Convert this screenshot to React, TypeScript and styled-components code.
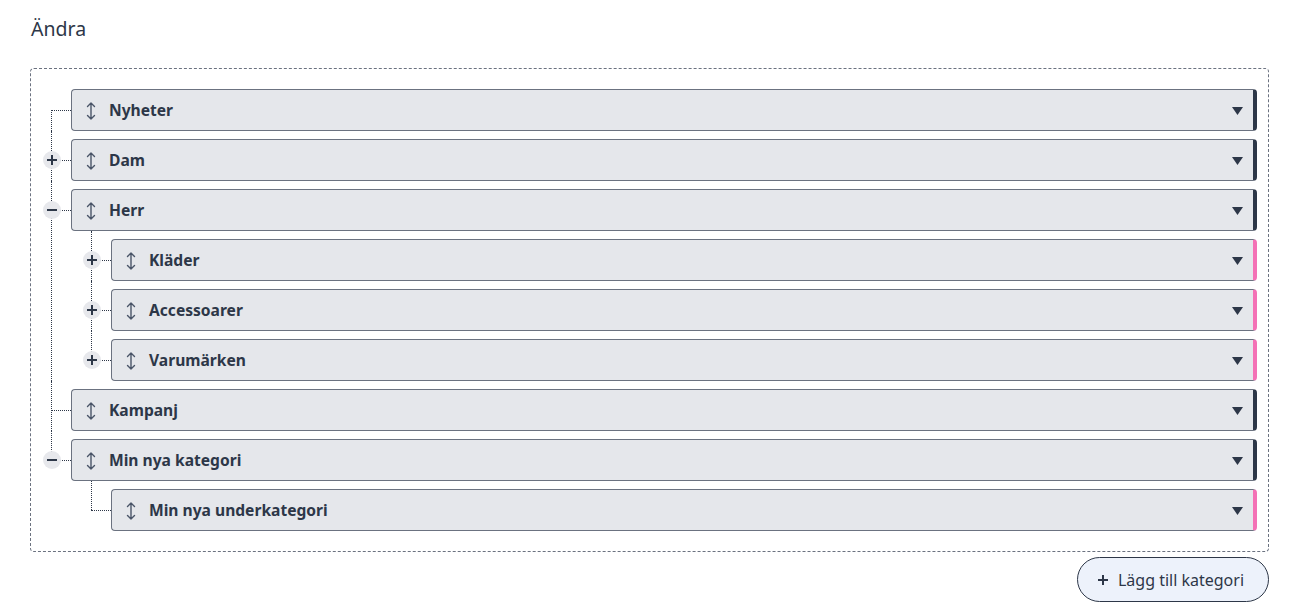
import React from "react";
import styled, { createGlobalStyle } from "styled-components";

const GlobalStyle = createGlobalStyle`
  html, body { margin: 0; padding: 0; background: #ffffff; }
  body { font-family: "Noto Sans", "Open Sans", sans-serif; color: #2d3748; }
  * { box-sizing: border-box; }
`;

const Page = styled.div`
  padding: 15px 29px 0 30px;
  display: flex;
  flex-direction: column;
`;

const Heading = styled.h2`
  margin: 0 0 25px 1px;
  font-size: 19.5px;
  line-height: 28px;
  font-weight: 400;
  color: #2d3748;
`;

const Frame = styled.div`
  border: 1px dashed #6b7280;
  border-radius: 4px;
  padding: 20px 11px 20px 0;
`;

const List = styled.div<{ $nested?: boolean }>`
  display: flex;
  flex-direction: column;
  gap: 8px;
  padding-left: ${(p) => (p.$nested ? "40px" : "0")};
  margin-top: ${(p) => (p.$nested ? "8px" : "0")};
`;

const Item = styled.div<{ $first: boolean; $last: boolean; $root: boolean }>`
  position: relative;
  &::before {
    content: "";
    position: absolute;
    left: 20px;
    top: ${(p) => (p.$first && p.$root ? "21px" : "-8px")};
    ${(p) => (p.$last ? `height: ${p.$first && p.$root ? 0 : 29}px;` : "bottom: 0;")}
    border-left: 1px dotted #2d3748;
  }
  &::after {
    content: "";
    position: absolute;
    left: 20px;
    top: 21px;
    width: 20px;
    border-top: 1px dotted #2d3748;
  }
`;

const Row = styled.div`
  display: flex;
  align-items: center;
`;

const ToggleCell = styled.div`
  width: 40px;
  flex: none;
  display: flex;
  justify-content: center;
  align-items: center;
  position: relative;
  z-index: 1;
`;

const Toggle = styled.button`
  width: 18px;
  height: 18px;
  border-radius: 50%;
  border: none;
  background: #e7e8ec;
  padding: 0;
  display: flex;
  align-items: center;
  justify-content: center;
  cursor: pointer;
  margin-left: 1px;
`;

const Card = styled.div<{ $accent: string }>`
  flex: 1;
  height: 42px;
  display: flex;
  align-items: center;
  background: #e5e7eb;
  border: 1px solid #6b7280;
  border-right: 4px solid ${(p) => p.$accent};
  border-radius: 4px;
  padding: 0 10px 0 13px;
  position: relative;
  z-index: 1;
`;

const Handle = styled.span`
  display: flex;
  width: 12px;
  margin-right: 12px;
  margin-top: 1px;
`;

const Label = styled.span`
  flex: 1;
  font-size: 15.6px;
  font-weight: 700;
  color: #2d3748;
`;

const Caret = styled.span`
  display: flex;
  margin-top: 1px;
`;

const Footer = styled.div`
  display: flex;
  justify-content: flex-end;
  margin-top: 5px;
`;

const AddButton = styled.button`
  height: 45px;
  width: 192px;
  border-radius: 23px;
  border: 1px solid #2d3748;
  background: #edf2fb;
  color: #2d3748;
  font-family: "Noto Sans", "Open Sans", sans-serif;
  font-size: 16px;
  display: flex;
  align-items: center;
  justify-content: center;
  gap: 10px;
  padding: 0 4px 0 0;
  cursor: pointer;
`;

type Node = { label: string; children?: Node[]; expanded?: boolean };

const tree: Node[] = [
  { label: "Nyheter" },
  { label: "Dam", children: [], expanded: false },
  {
    label: "Herr",
    expanded: true,
    children: [
      { label: "Kläder", children: [], expanded: false },
      { label: "Accessoarer", children: [], expanded: false },
      { label: "Varumärken", children: [], expanded: false },
    ],
  },
  { label: "Kampanj" },
  {
    label: "Min nya kategori",
    expanded: true,
    children: [{ label: "Min nya underkategori" }],
  },
];

const SignIcon = ({ plus }: { plus: boolean }) => (
  <svg width="10" height="10" viewBox="0 0 10 10">
    <path d={plus ? "M0 5H10M5 0V10" : "M0 5H10"} stroke="#2d3748" strokeWidth="2" />
  </svg>
);

const DragIcon = () => (
  <svg width="12" height="20" viewBox="0 0 12 20" fill="none">
    <path
      d="M6 2V18M2.5 5.5L6 2L9.5 5.5M2.5 14.5L6 18L9.5 14.5"
      stroke="#4a5568"
      strokeWidth="1.4"
      strokeLinecap="round"
      strokeLinejoin="round"
    />
  </svg>
);

const CaretIcon = () => (
  <svg width="11" height="8" viewBox="0 0 11 8">
    <polygon points="0,0 11,0 5.5,8" fill="#2d3748" />
  </svg>
);

const TreeNodes = ({ nodes, depth }: { nodes: Node[]; depth: number }) => (
  <List $nested={depth > 0}>
    {nodes.map((n, i) => (
      <Item key={n.label} $first={i === 0} $last={i === nodes.length - 1} $root={depth === 0}>
        <Row>
          <ToggleCell>
            {n.children && (
              <Toggle aria-label={n.expanded ? "Fäll ihop" : "Expandera"}>
                <SignIcon plus={!n.expanded} />
              </Toggle>
            )}
          </ToggleCell>
          <Card $accent={depth === 0 ? "#2d3748" : "#f472b6"}>
            <Handle>
              <DragIcon />
            </Handle>
            <Label>{n.label}</Label>
            <Caret>
              <CaretIcon />
            </Caret>
          </Card>
        </Row>
        {n.expanded && n.children && n.children.length > 0 && (
          <TreeNodes nodes={n.children} depth={depth + 1} />
        )}
      </Item>
    ))}
  </List>
);

export default function App() {
  return (
    <>
      <GlobalStyle />
      <Page>
        <Heading>Ändra</Heading>
        <Frame>
          <TreeNodes nodes={tree} depth={0} />
        </Frame>
        <Footer>
          <AddButton>
            <SignIcon plus />
            Lägg till kategori
          </AddButton>
        </Footer>
      </Page>
    </>
  );
}
